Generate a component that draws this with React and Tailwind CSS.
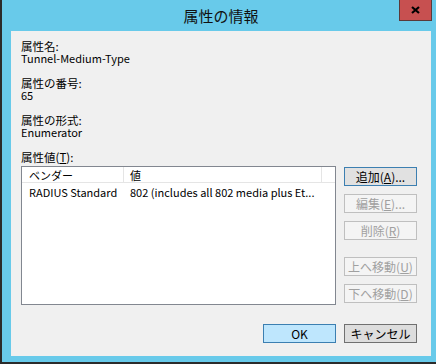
const fields = [
  { label: "属性名:", value: "Tunnel-Medium-Type" },
  { label: "属性の番号:", value: "65" },
  { label: "属性の形式:", value: "Enumerator" },
];

function Btn({ children, variant = "normal", className = "" }) {
  const styles = {
    normal: "border-[#707070] bg-[#dddddd] text-black",
    focus: "border-[#3c7fb1] bg-[#e1e1e1] text-black",
    primary: "border-[#3c7fb1] bg-[#bee6fd] text-black",
    disabled: "border-[#bfbfbf] bg-[#f4f4f4] text-[#a0a0a0]",
  };
  return (
    <button
      type="button"
      className={`flex h-[19px] w-[73px] items-center justify-center border text-[12px] leading-none ${styles[variant]} ${className}`}
    >
      {children}
    </button>
  );
}

export default function App() {
  return (
    <div className="flex h-[364px] w-[436px] flex-col border-b-2 border-l-2 border-[#2b2b2b] bg-[#68caea] font-['Noto_Sans_CJK_JP','Liberation_Sans',sans-serif] text-black">
      {/* title bar */}
      <div className="grid h-[31px] grid-cols-[1fr_auto_1fr]">
        <div />
        <div className="self-center pl-[4px] text-[15px] leading-none text-[#111]">属性の情報</div>
        <div className="flex justify-end pr-[4px]">
          <div className="flex h-[21px] w-[33px] items-center justify-center border border-t-0 border-[#5a3a3a] bg-[#c75050]">
            <svg width="9" height="8" viewBox="0 0 9 8">
              <path d="M1 1 L8 7 M8 1 L1 7" stroke="#000" strokeWidth="2.2" />
            </svg>
          </div>
        </div>
      </div>

      {/* client area */}
      <div className="ml-[9px] mr-[5px] h-[325px] bg-[#f0f0f0] pl-[10px] pt-[9px] text-[11.5px] leading-[12px]">
        {fields.map((f) => (
          <div key={f.label} className="mb-[13px]">
            <div className="h-[12px]">{f.label}</div>
            <div className="h-[12px] text-[11px]">{f.value}</div>
          </div>
        ))}
        <div className="h-[12px]">
          属性値(<span className="underline">T</span>):
        </div>

        <div className="mt-[3px] flex gap-[8px]">
          <div className="h-[139px] w-[315px] border border-[#828790] bg-white text-[11px]">
            <div className="flex h-[16px] items-center border-b border-[#e5e5e5]">
              <div className="flex h-full w-[102px] items-center border-r border-[#e5e5e5] pl-[7px]">ベンダー</div>
              <div className="flex h-full w-[198px] items-center border-r border-[#e5e5e5] pl-[6px]">値</div>
            </div>
            <div className="flex h-[17px] items-center">
              <div className="w-[102px] whitespace-nowrap pl-[7px]">RADIUS Standard</div>
              <div className="w-[198px] whitespace-nowrap pl-[6px]">802 (includes all 802 media plus Et...</div>
            </div>
          </div>

          <div className="flex flex-col pt-[1px]">
            <Btn variant="focus">
              追加(<span className="underline">A</span>)...
            </Btn>
            <Btn variant="disabled" className="mt-[8px]">
              編集(<span className="underline">E</span>)...
            </Btn>
            <Btn variant="disabled" className="mt-[8px]">
              削除(<span className="underline">R</span>)
            </Btn>
            <Btn variant="disabled" className="mt-[17px]">
              上へ移動(<span className="underline">U</span>)
            </Btn>
            <Btn variant="disabled" className="mt-[8px]">
              下へ移動(<span className="underline">D</span>)
            </Btn>
          </div>
        </div>

        <div className="mt-[19px] flex justify-end gap-[8px] pr-[14px]">
          <Btn variant="primary">OK</Btn>
          <Btn variant="normal">キャンセル</Btn>
        </div>
      </div>
    </div>
  );
}
